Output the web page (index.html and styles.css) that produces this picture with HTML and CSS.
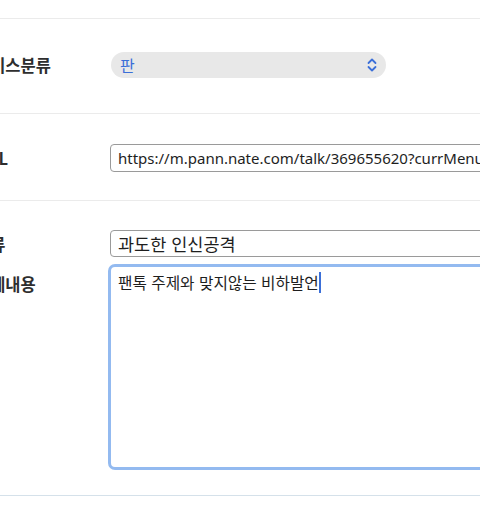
FILE: index.html
```html
<!DOCTYPE html>
<html lang="ko">
<head>
<meta charset="utf-8">
<link rel="stylesheet" href="styles.css">
</head>
<body>
<div class="page">
  <form class="form">
    <div class="row row-select">
      <label class="label">서비스분류</label>
      <div class="select">
        <span class="select-value">판</span>
        <svg class="chevron" width="12" height="16" viewBox="0 0 12 16"><path d="M2.5 6 L6 2.5 L9.5 6 M2.5 10 L6 13.5 L9.5 10" fill="none" stroke="#3b6fd8" stroke-width="1.8" stroke-linecap="round" stroke-linejoin="round"/></svg>
      </div>
    </div>
    <div class="row row-url">
      <label class="label">URL</label>
      <input class="input" type="text" value="https://m.pann.nate.com/talk/369655620?currMenu=talker">
    </div>
    <div class="group">
      <div class="row-inline">
        <label class="label">분류</label>
        <input class="input input-reason" type="text" value="과도한 인신공격">
      </div>
      <div class="row-inline row-top">
        <label class="label label-top">상세내용</label>
        <div class="textarea">팬톡 주제와 맞지않는 비하발언<span class="caret"></span></div>
      </div>
    </div>
  </form>
</div>
</body>
</html>
```

FILE: styles.css
```css
html, body {
  margin: 0;
  padding: 0;
  background: #ffffff;
  overflow: hidden;
}
body {
  width: 480px;
  height: 507px;
  font-family: "Noto Sans", "Noto Sans CJK KR", sans-serif;
}
.page {
  padding-top: 18px;
  width: 480px;
  overflow: hidden;
}
.form {
  margin-left: -25px;
  width: 700px;
  border-top: 1px solid #ebebeb;
}
.row {
  display: flex;
  align-items: center;
  border-bottom: 1px solid #ebebeb;
}
.row-select {
  padding: 33px 0 35px;
}
.row-url {
  padding: 30px 0 28px;
}
.label {
  width: 135px;
  flex: none;
  font-family: "Noto Sans CJK KR", "Noto Sans", sans-serif;
  font-size: 16.5px;
  font-weight: 700;
  color: #2e2e2e;
  line-height: 26px;
}
.select {
  width: 275px;
  height: 26px;
  margin-left: 1px;
  border-radius: 13px;
  background: #e8e8e8;
  display: flex;
  align-items: center;
  justify-content: space-between;
  padding: 0 8px 0 9px;
  box-sizing: border-box;
}
.select-value {
  font-family: "Noto Sans CJK KR", sans-serif;
  font-size: 16px;
  color: #3b6fd8;
  line-height: 26px;
}
.chevron {
  display: block;
}
.input {
  width: 500px;
  height: 28px;
  box-sizing: border-box;
  border: 1px solid #9a9a9a;
  border-radius: 4px;
  padding: 0 7px;
  margin: 0;
  font-family: "Noto Sans", "Noto Sans CJK KR", sans-serif;
  font-size: 15px;
  color: #1e1e1e;
  background: #ffffff;
  outline: none;
}
.input-reason {
  height: 27px;
  font-family: "Noto Sans CJK KR", sans-serif;
  font-size: 17.5px;
}
.group {
  padding: 29px 0 25px;
  border-bottom: 1px solid #d5e1ea;
  display: flex;
  flex-direction: column;
  gap: 7px;
}
.row-inline {
  display: flex;
  align-items: center;
}
.row-top {
  align-items: flex-start;
}
.label-top {
  padding-top: 7px;
}
.textarea {
  margin-left: -2px;
  width: 500px;
  height: 206px;
  box-sizing: border-box;
  border: 3px solid #93baf0;
  border-radius: 7px;
  padding: 5px 7px;
  font-family: "Noto Sans CJK KR", "Noto Sans", sans-serif;
  font-size: 15.7px;
  line-height: 22px;
  color: #1e1e1e;
}
.caret {
  display: inline-block;
  width: 2px;
  height: 21px;
  background: #3b6fd8;
  vertical-align: -4px;
}
```
